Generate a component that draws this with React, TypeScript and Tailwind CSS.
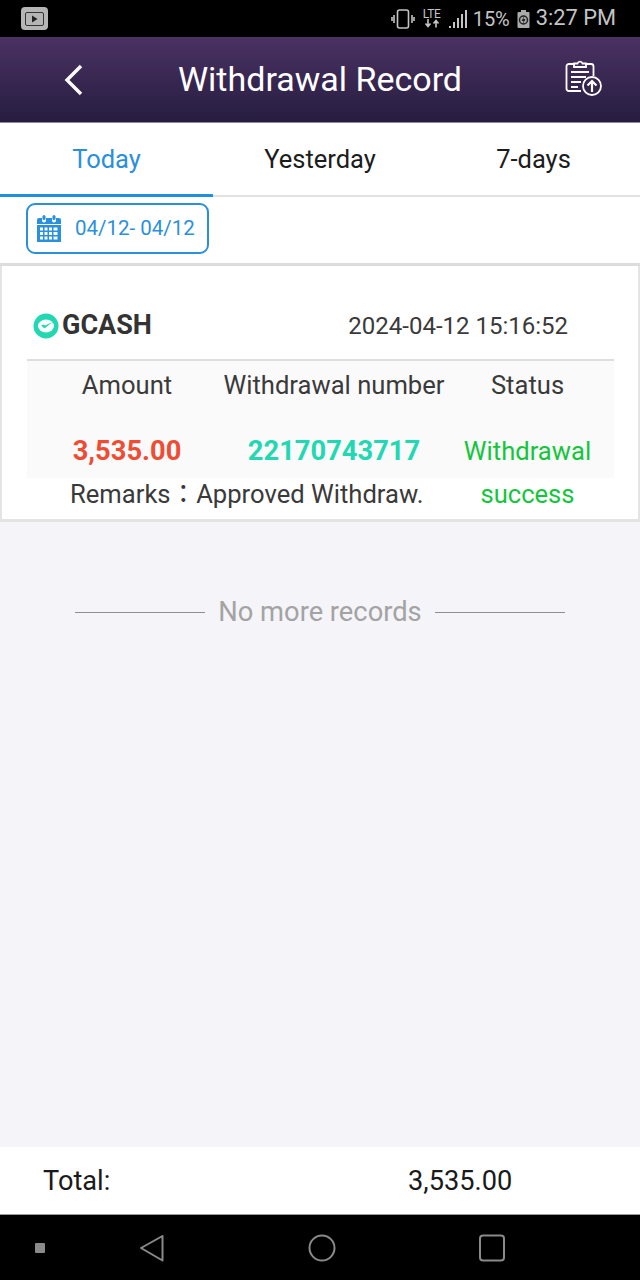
const font = { fontFamily: 'Roboto, "Noto Sans CJK TC", sans-serif' }

function StatusBar() {
  return (
    <div className="h-[37px] bg-black flex items-center justify-between pl-[21px] pr-[24px] text-[#c4c4c4]">
      <div className="w-[27px] h-[23px] rounded-[4px] bg-[#b5b5b5] flex items-center justify-center">
        <div className="w-[19px] h-[14px] rounded-[2px] border border-[#333] flex items-center justify-center">
          <svg width="7" height="8" viewBox="0 0 7 8"><path d="M1 0.5 L6.5 4 L1 7.5 Z" fill="#222" /></svg>
        </div>
      </div>
      <div className="flex items-center">
        <svg width="24" height="22" viewBox="0 0 24 22" fill="none" stroke="#c4c4c4" strokeWidth="1.6" className="mr-[7px]">
          <rect x="6.500" y="2" width="11" height="18" rx="2" />
          <path d="M3 7v8M1 9v4M21 7v8M23 9v4" />
        </svg>
        <div className="w-[20px] h-[22px] mr-[6px] flex flex-col items-center leading-none">
          <span className="text-[12px] tracking-[-0.3px] h-[11px]">LTE</span>
          <svg width="18" height="9" viewBox="0 0 18 9" fill="none" stroke="#c4c4c4" strokeWidth="1.6">
            <path d="M5 0v7M2.500 4.500L5 7.500l2.500-3M13 8.500v-7M10.500 4.500L13 1.500l2.500 3" />
          </svg>
        </div>
        <svg width="20" height="20" viewBox="0 0 20 20" fill="#c4c4c4" className="mr-[5px]">
          <rect x="1" y="17" width="2" height="2" />
          <rect x="5" y="13" width="2" height="6" />
          <rect x="9" y="9" width="2" height="10" />
          <rect x="13" y="5" width="2" height="14" />
          <rect x="17" y="1" width="2" height="18" />
        </svg>
        <span className="text-[20px] mr-[7px]">15%</span>
        <svg width="13" height="18" viewBox="0 0 13 18" className="mr-[6px]">
          <rect x="4" y="0" width="5" height="2" fill="#aaa" />
          <rect x="0.500" y="2" width="12" height="16" rx="1" fill="#aaa" />
          <circle cx="6.500" cy="10" r="4" fill="none" stroke="#222" strokeWidth="1.500" />
          <path d="M7.500 5.500 L4.500 11 H6.500 L5.500 15 L8.500 9 H6.500 Z" fill="#222" />
        </svg>
        <span className="text-[21.800px]">3:27 PM</span>
      </div>
    </div>
  )
}

function Header() {
  return (
    <div className="h-[86px] bg-gradient-to-b from-[#4b3263] to-[#261d40] flex items-center justify-between pl-[64px] pr-[37px] border-b border-[#8d8a99]">
      <svg width="20" height="32" viewBox="0 0 20 32" fill="none" stroke="#fff" strokeWidth="3.400">
        <path d="M17 2 L3 16 L17 30" />
      </svg>
      <span className="text-white text-[34px] ml-[-7px]">Withdrawal Record</span>
      <svg width="40" height="38" viewBox="0 0 40 38" fill="none" stroke="#fff" strokeWidth="1.800" className="mb-[4px]">
        <path d="M11 5H6a2.500 2.500 0 0 0-2.500 2.500v22A2.500 2.500 0 0 0 6 32h12" />
        <path d="M23 5h5a2.500 2.500 0 0 1 2.500 2.500V17" />
        <path d="M11 8V4.500h3.500a2.600 2.600 0 0 1 5 0H23V8Z" />
        <path d="M8 13h18M8 18h15M8 23h10M8 28h7" />
        <circle cx="29" cy="27" r="9" />
        <path d="M29 33V22M24.500 26.500L29 22l4.500 4.500" strokeWidth="2.200" />
      </svg>
    </div>
  )
}

function Tabs() {
  return (
    <div className="grid grid-cols-[213px_214px_213px] h-[74px] text-[25.500px] border-b-2 border-[#e2e2e2] text-[#1c1c1c]">
      <div className="flex items-center justify-center text-[#2a90dc] h-[74px] border-b-[3px] border-[#1f8fe0] pt-[1px]">Today</div>
      <div className="flex items-center justify-center pb-[1px]">Yesterday</div>
      <div className="flex items-center justify-center pb-[1px]">7-days</div>
    </div>
  )
}

function DateBar() {
  return (
    <div className="h-[69px] bg-white border-b-[3px] border-[#dcdcdc] pl-[26px] pt-[6px]">
      <div className="w-[183px] h-[51px] rounded-[9px] border-2 border-[#2a90dc] flex items-center pl-[9px] text-[#2a90dc] text-[20.500px]">
        <svg width="24" height="27" viewBox="0 0 24 27" fill="#2a90dc" className="mr-[14px]">
          <path d="M2 3h3v2.500a2 2 0 0 0 4 0V3h6v2.500a2 2 0 0 0 4 0V3h3a2 2 0 0 1 2 2v4H0V5a2 2 0 0 1 2-2Z" />
          <rect x="5.500" y="0" width="3" height="5" rx="1.500" />
          <rect x="15.500" y="0" width="3" height="5" rx="1.500" />
          <path fillRule="evenodd" d="M0 10h24v17H0Z M3 12.500v3h3v-3Z M7.500 12.500v3h3v-3Z M12 12.500v3h3v-3Z M16.500 12.500v3h4v-3Z M3 17v3h3v-3Z M7.500 17v3h3v-3Z M12 17v3h3v-3Z M16.500 17v3h4v-3Z M3 21.500v3h3v-3Z M7.500 21.500v3h3v-3Z M12 21.500v3h3v-3Z M16.500 21.500v3h4v-3Z" />
        </svg>
        <span>04/12- 04/12</span>
      </div>
    </div>
  )
}

function GcashLogo() {
  return (
    <svg width="26" height="26" viewBox="0 0 26 26" className="mr-[3px]">
      <circle cx="13" cy="13" r="12.500" fill="#22d8b2" />
      <ellipse cx="13" cy="13" rx="8" ry="6.500" fill="#fff" />
      <path d="M8 12.500l3.500 3 8-6.500-7.500 3.500-1.500-1Z" fill="#22d8b2" />
    </svg>
  )
}

function RecordCard() {
  return (
    <div className="bg-white h-[256px] border-x-2 border-b-[3px] border-[#e4e4e4] pl-[25px] pr-[24px]">
      <div className="h-[95px] border-b-2 border-[#dedede] flex items-center justify-between pl-[6px] pr-[46px] pt-[26px]">
        <div className="flex items-center">
          <GcashLogo />
          <span className="text-[27px] font-bold text-[#333]">GCASH</span>
        </div>
        <span className="text-[24px] text-[#3a3a3a]">2024-04-12 15:16:52</span>
      </div>
      <div className="bg-[#fafafa] h-[117px] grid grid-cols-[200px_214px_173px] grid-rows-[48px_69px] text-center text-[25.600px] text-[#3a3a3a] whitespace-nowrap">
        <div className="flex items-center justify-center">Amount</div>
        <div className="flex items-center justify-center">Withdrawal number</div>
        <div className="flex items-center justify-center">Status</div>
        <div className="flex items-center justify-center text-[27.300px] font-bold text-[#ef4c35] pt-[15px]">3,535.00</div>
        <div className="flex items-center justify-center text-[27.300px] font-bold text-[#22d8b2] pt-[15px]">22170743717</div>
        <div className="flex items-center justify-center text-[#14c63c] pt-[15px]">Withdrawal</div>
      </div>
      <div className="h-[41px] flex text-[25.600px] text-[#3a3a3a] pb-[9px] items-center">
        <div className="w-[414px] pl-[43px] whitespace-nowrap">Remarks：Approved Withdraw.</div>
        <div className="w-[173px] text-center text-[#14c63c]">success</div>
      </div>
    </div>
  )
}

function NoMore() {
  return (
    <div className="flex items-center justify-center mt-[70px] text-[27.300px] text-[#a3a3a3]">
      <div className="w-[130px] h-px bg-[#8f8f8f]" />
      <span className="mx-[13px]">No more records</span>
      <div className="w-[130px] h-px bg-[#8f8f8f]" />
    </div>
  )
}

function NavBar() {
  return (
    <div className="h-[66px] bg-black border-t border-[#9a9a9a] flex items-center pl-[35px]">
      <div className="w-[10px] h-[10px] rounded-[1px] bg-[#8a8a8a] mr-[94px]" />
      <svg width="26" height="28" viewBox="0 0 26 28" fill="none" stroke="#8a8a8a" strokeWidth="2" className="mr-[143px]">
        <path d="M23.500 2 L2 14 L23.500 26.500 Z" strokeLinejoin="round" />
      </svg>
      <svg width="28" height="28" viewBox="0 0 28 28" fill="none" stroke="#8a8a8a" strokeWidth="2" className="mr-[142px]">
        <circle cx="14" cy="14" r="12.500" />
      </svg>
      <svg width="28" height="28" viewBox="0 0 28 28" fill="none" stroke="#8a8a8a" strokeWidth="2">
        <rect x="2" y="1.500" width="24" height="25" rx="3" />
      </svg>
    </div>
  )
}

export default function App() {
  return (
    <div className="w-[640px] h-[1280px] flex flex-col bg-[#f4f4f9] overflow-hidden" style={font}>
      <StatusBar />
      <Header />
      <div className="bg-white">
        <Tabs />
        <DateBar />
      </div>
      <RecordCard />
      <div className="flex-1">
        <NoMore />
      </div>
      <div className="h-[67px] bg-white flex items-center pl-[43px] pt-[1px] text-[27.200px] text-[#1a1a1a]">
        <span className="w-[365px]">Total:</span>
        <span>3,535.00</span>
      </div>
      <NavBar />
    </div>
  )
}
